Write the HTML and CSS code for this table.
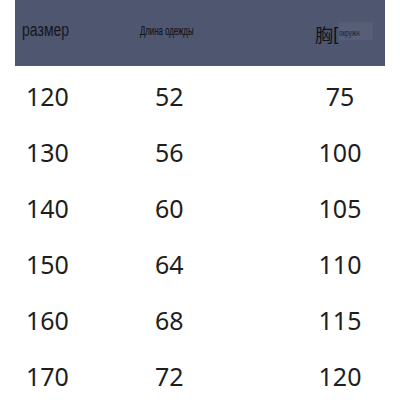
FILE: index.html
```html
<!DOCTYPE html>
<html>
<head>
<meta charset="utf-8">
<link rel="stylesheet" href="styles.css">
</head>
<body>
<div class="table">
  <div class="head">
    <div class="h1"><span class="narrow big">размер</span></div>
    <div class="h2"><span class="narrow small">Длина одежды</span></div>
    <div class="h3"><span class="cjk">胸</span><span class="brk">[</span><span class="tiny-box"><span class="tiny">окружн</span></span></div>
  </div>
  <div class="rows">
    <div class="row"><span class="c1">120</span><span class="c2">52</span><span class="c3">75</span></div>
    <div class="row"><span class="c1">130</span><span class="c2">56</span><span class="c3">100</span></div>
    <div class="row"><span class="c1">140</span><span class="c2">60</span><span class="c3">105</span></div>
    <div class="row"><span class="c1">150</span><span class="c2">64</span><span class="c3">110</span></div>
    <div class="row"><span class="c1">160</span><span class="c2">68</span><span class="c3">115</span></div>
    <div class="row"><span class="c1">170</span><span class="c2">72</span><span class="c3">120</span></div>
  </div>
</div>
</body>
</html>
```
FILE: styles.css
```css
html, body {
  margin: 0;
  padding: 0;
  background: #ffffff;
}
.table {
  width: 370px;
  margin-left: 15px;
}
.head {
  height: 66px;
  background: #4e576f;
  display: grid;
  grid-template-columns: 125px 175px 70px;
  color: #14161c;
}
.h1 {
  padding-left: 7px;
  padding-top: 20px;
}
.h2 {
  padding-top: 21px;
}
.h3 {
  padding-top: 25px;
  display: flex;
  align-items: flex-start;
}
.narrow {
  display: inline-block;
  font-family: "Liberation Sans", Arial, sans-serif;
  transform-origin: left top;
  white-space: nowrap;
}
.big {
  font-size: 18px;
  line-height: 20px;
  transform: scaleX(0.78);
}
.small {
  font-size: 13.5px;
  line-height: 16px;
  transform: scaleX(0.58);
  -webkit-text-stroke: 0.2px #14161c;
}
.cjk {
  font-family: "Noto Sans CJK SC", sans-serif;
  font-size: 18px;
  line-height: 18px;
  color: #10131c;
}
.brk {
  font-family: "Liberation Sans", Arial, sans-serif;
  font-size: 19px;
  line-height: 18px;
  color: #10131c;
}
.tiny-box {
  background: #575f77;
  height: 18px;
  width: 34px;
  margin-left: 1px;
  margin-top: -3px;
  overflow: hidden;
}
.tiny {
  display: inline-block;
  font-family: "Liberation Sans", Arial, sans-serif;
  font-size: 9px;
  line-height: 10px;
  padding-top: 3px;
  transform: scaleX(0.7);
  transform-origin: left top;
  color: #1c2030;
  white-space: nowrap;
}
.rows {
  padding-top: 2px;
}
.row {
  height: 56px;
  line-height: 56px;
  display: grid;
  grid-template-columns: 140px 140px 90px;
  font-family: "Noto Sans", sans-serif;
  font-size: 25px;
  color: #1e1e1e;
}
.c1 {
  padding-left: 11px;
}
.c3 {
  text-align: center;
}
```
